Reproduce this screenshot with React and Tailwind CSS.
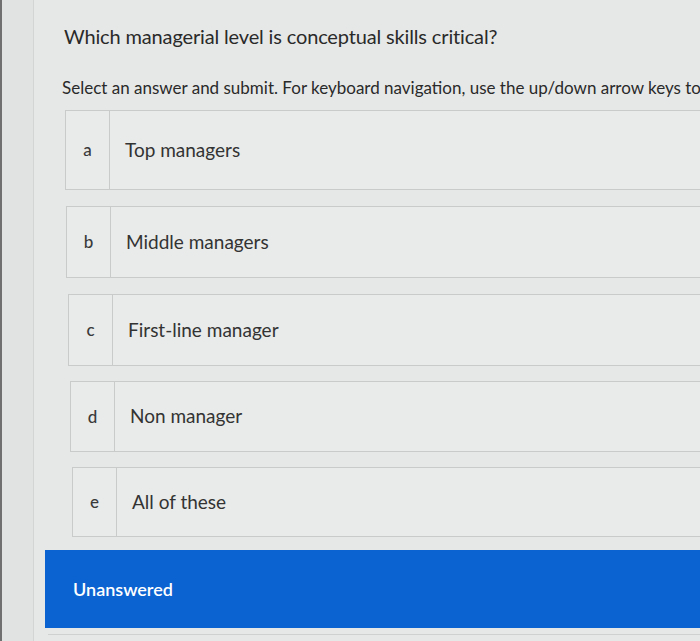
export default function App() {
  const font = { fontFamily: "Lato, 'Noto Sans', sans-serif" };
  const options = [
    { key: "a", text: "Top managers", box: "h-[80px] ml-[0px]" },
    { key: "b", text: "Middle managers", box: "h-[72px] ml-[1px] mt-[16px]" },
    { key: "c", text: "First-line manager", box: "h-[72px] ml-[3px] mt-[16px]" },
    { key: "d", text: "Non manager", box: "h-[71px] ml-[5px] mt-[15px]" },
    { key: "e", text: "All of these", box: "h-[70px] ml-[7px] mt-[15px]" },
  ];

  return (
    <div style={font} className="w-[700px] h-[641px] overflow-hidden bg-[#e6e8e7] flex">
      {/* screen edge */}
      <div className="w-[2px] bg-[#6f706f] flex-shrink-0" />
      <div className="w-[32px] bg-[#e1e3e2] border-r border-[#d3d5d4] flex-shrink-0" />

      <div className="flex-1 flex flex-col min-w-0">
        <div className="pl-[30px] pt-[21px]">
          <h1 className="text-[20px] leading-[30px] tracking-[-0.15px] text-[#2a2a2a] whitespace-nowrap">
            Which managerial level is conceptual skills critical?
          </h1>
          <p className="mt-[24px] text-[17px] leading-[26px] text-[#2a2a2a] whitespace-nowrap -ml-[2px]">
            Select an answer and submit. For keyboard navigation, use the up/down arrow keys to
          </p>
        </div>

        <div className="pl-[31px] mt-[9px] flex flex-col">
          {options.map((o) => (
            <div
              key={o.key}
              className={`flex w-[700px] flex-shrink-0 bg-[#e9ebea] border border-[#c9cbca] ${o.box}`}
            >
              <div className="w-[44px] flex items-center justify-center border-r border-[#c9cbca] text-[17px] font-medium text-[#3a3a3a]">
                {o.key}
              </div>
              <div className="pl-[15px] flex items-center text-[19px] text-[#333]">
                {o.text}
              </div>
            </div>
          ))}
        </div>

        <div className="ml-[11px] mt-[13px] h-[78px] flex-shrink-0 bg-[#0b63d1] flex items-center pl-[28px]">
          <span className="text-white text-[18px] font-semibold">Unanswered</span>
        </div>
        <div className="ml-[14px] mt-[6px] border-t border-[#cfd1d0]" />
      </div>
    </div>
  );
}
